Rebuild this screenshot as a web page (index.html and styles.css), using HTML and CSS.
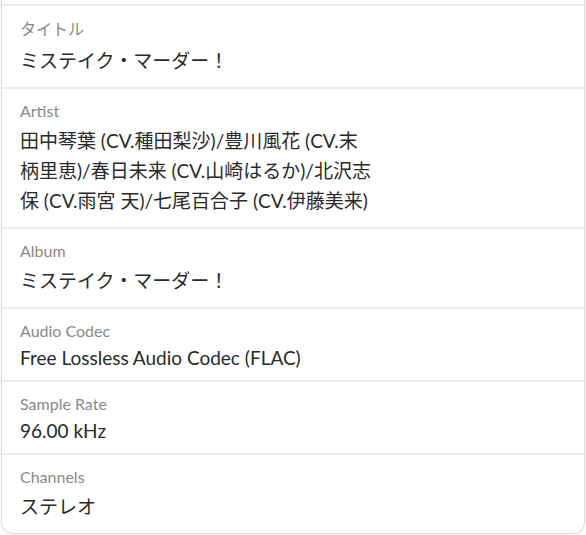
FILE: index.html
```
<!DOCTYPE html>
<html lang="ja">
<head>
    <meta charset="UTF-8">
    <meta name="viewport" content="width=device-width, initial-scale=1.0">
    <title>Properties</title>
    <link rel="stylesheet" href="styles.css">
</head>
<body>
    <div class="list">
        <div class="row">
            <div class="label cjk">タイトル</div>
            <div class="value cjk">ミステイク・マーダー！</div>
        </div>
        <div class="row">
            <div class="label">Artist</div>
            <div class="value cjk">田中琴葉 (CV.種田梨沙)/豊川風花 (CV.末柄里恵)/春日未来 (CV.山崎はるか)/北沢志保 (CV.雨宮 天)/七尾百合子 (CV.伊藤美来)</div>
        </div>
        <div class="row">
            <div class="label">Album</div>
            <div class="value cjk">ミステイク・マーダー！</div>
        </div>
        <div class="row">
            <div class="label">Audio Codec</div>
            <div class="value">Free Lossless Audio Codec (FLAC)</div>
        </div>
        <div class="row">
            <div class="label">Sample Rate</div>
            <div class="value">96.00 kHz</div>
        </div>
        <div class="row">
            <div class="label">Channels</div>
            <div class="value cjk">ステレオ</div>
        </div>
    </div>
</body>
</html>
```

FILE: styles.css
```
body {
    margin: 0;
    padding: 0;
    background-color: #fafafa;
    font-family: 'Lato', 'Noto Sans CJK JP', sans-serif;
}

.list {
    margin: 0 1px;
    padding-top: 4px;
    background-color: #ffffff;
    border: 1px solid #dcdcdc;
    border-top: none;
    border-radius: 0 0 12px 12px;
}

.row {
    display: flex;
    flex-direction: column;
    gap: 6px;
    padding: 12px 18px 11px 18px;
    border-top: 2px solid #ececec;
}

.label {
    font-size: 16px;
    line-height: 19px;
    color: #8a8a8a;
}

.label.cjk {
    line-height: 22px;
}

.value {
    max-width: 354px;
    font-size: 19px;
    line-height: 23px;
    color: #2a2a2a;
}

.value.cjk {
    line-height: 30px;
}
```
